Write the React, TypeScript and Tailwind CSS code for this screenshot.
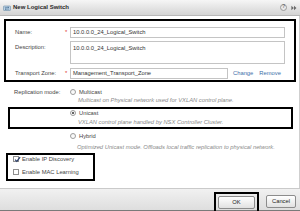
function Radio({ checked }: { checked?: boolean }) {
  return (
    <span className="flex h-[6px] w-[6px] shrink-0 items-center justify-center rounded-full border border-[#9c9c9c] bg-linear-to-b from-[#f4f4f4] to-white">
      {checked && <span className="h-[2px] w-[2px] rounded-full bg-[#333]" />}
    </span>
  );
}

function Check({ checked }: { checked?: boolean }) {
  return (
    <span className="relative flex h-[6px] w-[6px] shrink-0 items-center justify-center border border-[#8f8f8f] bg-white">
      {checked && (
        <svg viewBox="0 0 8 8" className="absolute left-[0px] top-[-1px] h-[7px] w-[7px]">
          <path d="M1.2 4.2 L3.2 6.2 L7 1.2" fill="none" stroke="#2b3f6b" strokeWidth="1.4" />
        </svg>
      )}
    </span>
  );
}

function Button({ label }: { label: string }) {
  return (
    <div className="flex h-[13px] items-center justify-center rounded-[2px] border border-[#8c8c8c] bg-linear-to-b from-white to-[#e1e1e1] text-[5.8px] text-[#222]">
      {label}
    </div>
  );
}

export default function App() {
  return (
    <div className="flex h-[211px] w-[300px] flex-col overflow-hidden bg-white text-[#444] [font-family:'Liberation_Sans',Arial,sans-serif]">
      {/* title bar */}
      <div className="flex h-[16px] shrink-0 items-center border-b border-[#b8b8b8] bg-linear-to-b from-[#f6f6f6] to-[#d4d4d4] pl-[3px] pr-[3px]">
        <svg viewBox="0 0 8 8" className="h-[8px] w-[8px]">
          <rect x="0.5" y="2" width="7" height="4.5" rx="0.6" fill="#bcd3e6" stroke="#6f8ea8" strokeWidth="0.6" />
          <path d="M1.8 3.4 H5.8 M4.8 2.8 L5.8 3.4 L4.8 4" fill="none" stroke="#2f5b82" strokeWidth="0.5" />
          <path d="M6.2 5.1 H2.2 M3.2 4.5 L2.2 5.1 L3.2 5.7" fill="none" stroke="#2f5b82" strokeWidth="0.5" />
        </svg>
        <span className="ml-[2px] text-[6px] font-bold text-[#2a2a2a]">New Logical Switch</span>
        <div className="ml-auto flex items-center gap-[4px]">
          <span className="flex h-[7px] w-[7px] items-center justify-center rounded-full border border-[#9a9a9a] bg-[#e9e9e9] text-[4.5px] font-bold text-[#666]">
            ?
          </span>
          <svg viewBox="0 0 8 8" className="h-[6px] w-[6px]">
            <path d="M0.5 1 L3.8 4 L0.5 7 Z M4 1 L7.3 4 L4 7 Z" fill="#6a6a6a" />
          </svg>
        </div>
      </div>

      {/* body */}
      <div className="flex min-h-0 flex-1 flex-col border-r border-[#cfcfcf] text-[5.8px]">
        <div className="ml-[4px] mr-[3px] mt-[3px] border-2 border-black pb-[1px] pl-[9px] pr-[9px] pt-[6px]">
          <div className="flex h-[11px] items-center">
            <span className="w-[50px]">Name:</span>
            <span className="w-[5px] text-[#d33]">*</span>
            <div className="flex h-[11px] flex-1 items-center border border-[#c4c4c4] px-[2px] text-[#333]">
              10.0.0.0_24_Logical_Switch
            </div>
          </div>
          <div className="mt-[3px] flex h-[23px] items-start">
            <span className="w-[55px] pt-[2px]">Description:</span>
            <div className="h-[23px] flex-1 border border-[#c4c4c4] px-[2px] pt-[2px] text-[#333]">
              10.0.0.0_24_Logical_Switch
            </div>
          </div>
          <div className="mt-[4px] flex h-[11px] items-center">
            <span className="w-[50px]">Transport Zone:</span>
            <span className="w-[5px] text-[#d33]">*</span>
            <div className="flex h-[11px] w-[158px] items-center border border-[#c4c4c4] px-[2px] text-[#333]">
              Management_Transport_Zone
            </div>
            <span className="ml-[5px] text-[#3d6ea8]">Change</span>
            <span className="ml-[6px] text-[#3d6ea8]">Remove</span>
          </div>
        </div>

        <div className="mt-[6px] flex h-[8px] items-center pl-[14px]">
          <span className="w-[56px]">Replication mode:</span>
          <Radio />
          <span className="ml-[3px]">Multicast</span>
        </div>
        <div className="flex h-[8px] items-center pl-[78px] italic text-[#8a8a8a]">
          Multicast on Physical network used for VXLAN control plane.
        </div>

        <div className="ml-[8px] mr-[6px] mt-[3px] border-2 border-black pb-[1px] pl-[60px]">
          <div className="flex h-[8px] items-center">
            <Radio checked />
            <span className="ml-[3px]">Unicast</span>
          </div>
          <div className="mt-[1px] flex h-[8px] items-center pl-[8px] italic text-[#8a8a8a]">
            VXLAN control plane handled by NSX Controller Cluster.
          </div>
        </div>

        <div className="mt-[3px] flex h-[8px] items-center pl-[70px]">
          <Radio />
          <span className="ml-[3px]">Hybrid</span>
        </div>
        <div className="mt-[3px] flex h-[8px] items-center whitespace-nowrap pl-[77px] italic text-[#8a8a8a]">
          Optimized Unicast mode. Offloads local traffic replication to physical network.
        </div>

        <div className="ml-[6px] mt-[2px] w-[89px] border-2 border-black pb-[3px] pl-[5px]">
          <div className="flex h-[8px] items-center">
            <Check checked />
            <span className="ml-[3px]">Enable IP Discovery</span>
          </div>
          <div className="mt-[5px] flex h-[8px] items-center">
            <Check />
            <span className="ml-[3px]">Enable MAC Learning</span>
          </div>
        </div>
      </div>

      {/* footer */}
      <div className="flex h-[23px] shrink-0 items-start justify-end border-b border-t border-b-[#7a7a7a] border-t-[#cacaca] bg-linear-to-b from-[#f1f1f1] to-[#dedede] pr-[4px] pt-[3px]">
        <div className="border-2 border-black p-[2px]">
          <div className="w-[37px]">
            <Button label="OK" />
          </div>
        </div>
        <div className="ml-[7px] mt-[3px] w-[30px]">
          <Button label="Cancel" />
        </div>
      </div>
    </div>
  );
}
